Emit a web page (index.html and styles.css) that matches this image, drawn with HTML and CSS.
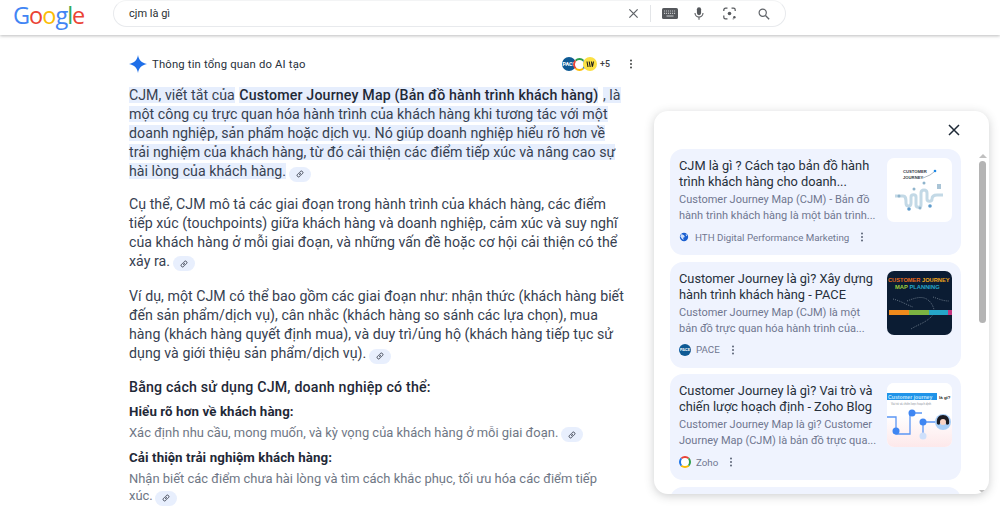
FILE: index.html
```html
<!DOCTYPE html>
<html lang="vi">
<head>
<meta charset="utf-8">
<title>cjm là gì</title>
<link rel="stylesheet" href="styles.css">
</head>
<body>
<svg class="defs" width="0" height="0" aria-hidden="true">
  <symbol id="chain" viewBox="0 0 24 24"><path fill="none" stroke="#474d5c" stroke-width="3" stroke-linecap="round" d="M10 14a4.5 4.5 0 0 0 6.4 0l3-3a4.5 4.5 0 0 0-6.4-6.4l-1.5 1.5M14 10a4.5 4.5 0 0 0-6.4 0l-3 3a4.5 4.5 0 0 0 6.4 6.4l1.5-1.5"/></symbol>
  <symbol id="dots" viewBox="0 0 4 14"><circle cx="2" cy="2" r="1.4"/><circle cx="2" cy="7" r="1.4"/><circle cx="2" cy="12" r="1.4"/></symbol>
</svg>
<header class="topbar">
  <div class="logo"><span class="b">G</span><span class="r">o</span><span class="y">o</span><span class="b">g</span><span class="g">l</span><span class="r">e</span></div>
  <div class="search">
    <span class="query">cjm là gì</span>
    <div class="tools">
      <svg class="ic-x" viewBox="0 0 12 12"><path d="M1.5 1.5l9 9M10.500 1.500l-9 9" stroke="#5f6368" stroke-width="1.400" fill="none"/></svg>
      <span class="divider"></span>
      <svg class="ic-kb" viewBox="0 0 16 11"><rect width="16" height="11" rx="1.600" fill="#55585c"/><path d="M2 3h12M2 5.400h12" stroke="#c4c6c9" stroke-width="1.100" stroke-dasharray="1.100 .9"/><path d="M4.500 8h7" stroke="#c4c6c9" stroke-width="1.100"/></svg>
      <svg class="ic-mic" viewBox="0 0 12 16"><rect x="3.500" y="0.500" width="5" height="9.500" rx="2.500" fill="#55585c"/><path d="M1.200 7.500a4.800 4.800 0 0 0 9.600 0M6 12.500V15.500" fill="none" stroke="#55585c" stroke-width="1.300"/></svg>
      <svg class="ic-lens" viewBox="0 0 16 16"><path d="M1 5V3.500A2 2 0 0 1 3 1.500h2.500M15 5V3.500a2 2 0 0 0-2-2h-2.500M1 10.500V12.500a2 2 0 0 0 2 2h2.500M13 14.500h-1" fill="none" stroke="#55585c" stroke-width="1.500"/><circle cx="8" cy="8" r="2.200" fill="#55585c"/><circle cx="14" cy="12.500" r="1.500" fill="#55585c"/></svg>
      <svg class="ic-search" viewBox="0 0 14 14"><circle cx="5.500" cy="5.500" r="4.200" fill="none" stroke="#5f6368" stroke-width="1.400"/><path d="M8.700 8.700L13 13" stroke="#5f6368" stroke-width="1.600"/></svg>
    </div>
  </div>
</header>

<div class="page">
  <main class="overview">
    <div class="ov-head">
      <svg class="spark" viewBox="0 0 18 18"><path d="M9 0c.7 4.900 3.600 8 9 9-5.400 1-8.300 4.100-9 9-.7-4.900-3.600-8-9-9 5.400-1 8.300-4.100 9-9z" fill="#1f6fe8"/></svg>
      <span class="ov-title">Thông tin tổng quan do AI tạo</span>
      <div class="ov-sources">
        <span class="fav fav-pace">PACE</span>
        <span class="fav fav-zoho"></span>
        <span class="fav fav-hth"><svg viewBox="0 0 10 10"><path d="M2 2.500l1 5.500M4.200 2.500l1 5.500M6.400 2.500l1 5.500M8.500 2.500L7.600 7" stroke="#1c1c1c" stroke-width="1.100" fill="none"/></svg></span>
        <span class="more">+5</span>
      </div>
      <svg class="kebab-lg" viewBox="0 0 4 14"><use href="#dots"/></svg>
    </div>

    <p class="para"><span class="hl">CJM, viết tắt của</span> <b class="hl strong">Customer Journey Map (Bản đồ hành trình khách hàng)</b> <span class="hl">, là</span><br><span class="hl">một công cụ trực quan hóa hành trình của khách hàng khi tương tác với một</span><br><span class="hl">doanh nghiệp, sản phẩm hoặc dịch vụ. Nó giúp doanh nghiệp hiểu rõ hơn về</span><br><span class="hl">trải nghiệm của khách hàng, từ đó cải thiện các điểm tiếp xúc và nâng cao sự</span><br><span class="hl">hài lòng của khách hàng.</span> <span class="link"><svg viewBox="0 0 24 24"><use href="#chain"/></svg></span></p>

    <p class="para">Cụ thể, CJM mô tả các giai đoạn trong hành trình của khách hàng, các điểm<br>tiếp xúc (touchpoints) giữa khách hàng và doanh nghiệp, cảm xúc và suy nghĩ<br>của khách hàng ở mỗi giai đoạn, và những vấn đề hoặc cơ hội cải thiện có thể<br>xảy ra. <span class="link"><svg viewBox="0 0 24 24"><use href="#chain"/></svg></span></p>

    <p class="para">Ví dụ, một CJM có thể bao gồm các giai đoạn như: nhận thức (khách hàng biết<br>đến sản phẩm/dịch vụ), cân nhắc (khách hàng so sánh các lựa chọn), mua<br>hàng (khách hàng quyết định mua), và duy trì/ủng hộ (khách hàng tiếp tục sử<br>dụng và giới thiệu sản phẩm/dịch vụ). <span class="link"><svg viewBox="0 0 24 24"><use href="#chain"/></svg></span></p>

    <h2 class="sub">Bằng cách sử dụng CJM, doanh nghiệp có thể:</h2>
    <h3 class="item-h">Hiểu rõ hơn về khách hàng:</h3>
    <p class="item-t">Xác định nhu cầu, mong muốn, và kỳ vọng của khách hàng ở mỗi giai đoạn. <span class="link"><svg viewBox="0 0 24 24"><use href="#chain"/></svg></span></p>
    <h3 class="item-h">Cải thiện trải nghiệm khách hàng:</h3>
    <p class="item-t">Nhận biết các điểm chưa hài lòng và tìm cách khắc phục, tối ưu hóa các điểm tiếp<br>xúc. <span class="link"><svg viewBox="0 0 24 24"><use href="#chain"/></svg></span></p>
  </main>

  <aside class="panel">
    <div class="panel-head">
      <svg class="close" viewBox="0 0 12 12"><path d="M1 1l10 10M11 1L1 11" stroke="#1f2a37" stroke-width="1.500" fill="none"/></svg>
    </div>
    <div class="panel-body">
      <div class="cards">
        <article class="card">
          <div class="card-text">
            <h4 class="card-title">CJM là gì ? Cách tạo bản đồ hành<br>trình khách hàng cho doanh...</h4>
            <p class="card-snip">Customer Journey Map (CJM) - Bản đồ<br>hành trình khách hàng là một bản trình...</p>
            <div class="card-src">
              <svg class="src-ic" viewBox="0 0 12 12"><circle cx="6" cy="6" r="5" fill="#1a5fd0"/><path d="M3 2.500l3 1.500 1 2-2 1 .5 3L3 7.500 1.500 5zM8 2l2 2-1.500 1z" fill="#cfe0fb"/></svg>
              <span>HTH Digital Performance Marketing</span>
              <svg class="kebab" viewBox="0 0 4 14"><use href="#dots"/></svg>
            </div>
          </div>
          <div class="thumb thumb-a">
            <svg viewBox="0 0 65 64">
              <text x="16" y="15" class="t-a">CUSTOMER</text>
              <text x="16" y="21" class="t-a">JOURNEY</text>
              <path d="M36 20l7-3 4-3" stroke="#7a8a99" stroke-width=".6" fill="none"/>
              <circle cx="48" cy="13" r="1.300" fill="#1e88e5"/>
              <path d="M8 38h8c3 0 3 3 3 7s5 4 5 0v-6c0-3 5-3 5 0v8c0 3 5 3 5 0v-12c0-4 6-4 6 0v6c0 3 5 3 5 0 0-3 2-4 5-4h6" stroke="#c3d9e6" stroke-width="3" fill="none"/>
              <circle cx="12" cy="38" r="1.500" fill="#8fb4cc"/><circle cx="22" cy="51" r="1.800" fill="#5f9ccc"/><circle cx="33" cy="50" r="1.500" fill="#8fb4cc"/><circle cx="43" cy="48" r="1.800" fill="#5f9ccc"/><circle cx="27" cy="31" r="1.500" fill="#8fb4cc"/><circle cx="37" cy="25" r="1.500" fill="#8fb4cc"/><rect x="50" y="26" width="4" height="5" fill="#a9c4d6"/>
            </svg>
          </div>
        </article>

        <article class="card">
          <div class="card-text">
            <h4 class="card-title">Customer Journey là gì? Xây dựng<br>hành trình khách hàng - PACE</h4>
            <p class="card-snip">Customer Journey Map (CJM) là một<br>bản đồ trực quan hóa hành trình của...</p>
            <div class="card-src">
              <span class="src-pace">PACE</span>
              <span>PACE</span>
              <svg class="kebab" viewBox="0 0 4 14"><use href="#dots"/></svg>
            </div>
          </div>
          <div class="thumb thumb-b">
            <svg viewBox="0 0 65 64">
              <text x="1" y="11" class="t-b1">CUSTOMER <tspan fill="#f2a71b">JOURNEY</tspan></text>
              <text x="8" y="18" class="t-b2"><tspan fill="#9ccc3c">MAP</tspan> <tspan fill="#26a6c9">PLANNING</tspan></text>
              <path d="M6 28c8 2 14 6 20 8M20 30c10-4 18-6 24 2 4 6 4 10 0 14-6 6-14 8-20 12M46 26c6 2 10 4 16 4" stroke="#9aa8b4" stroke-width=".6" fill="none" stroke-dasharray="1 1"/>
              <rect x="2" y="39" width="20" height="5" fill="#f08a1c"/><rect x="22" y="39" width="20" height="5" fill="#7cb342"/><rect x="42" y="39" width="19" height="5" fill="#26a6c9"/><rect x="61" y="39" width="4" height="5" fill="#c2357f"/>
            </svg>
          </div>
        </article>

        <article class="card">
          <div class="card-text">
            <h4 class="card-title">Customer Journey là gì? Vai trò và<br>chiến lược hoạch định - Zoho Blog</h4>
            <p class="card-snip">Customer Journey Map là gì? Customer<br>Journey Map (CJM) là bản đồ trực qua...</p>
            <div class="card-src">
              <span class="src-zoho"></span>
              <span>Zoho</span>
              <svg class="kebab" viewBox="0 0 4 14"><use href="#dots"/></svg>
            </div>
          </div>
          <div class="thumb thumb-c">
            <svg viewBox="0 0 65 64">
              <defs><linearGradient id="pink" x1="0" y1="0" x2="0" y2="1"><stop offset="0.500" stop-color="#fff"/><stop offset="1" stop-color="#fde8ea"/></linearGradient></defs>
              <rect width="65" height="64" fill="url(#pink)"/>
              <rect x="0" y="10" width="50" height="7" fill="#1f93e8"/>
              <text x="1" y="15.500" class="t-c1">Customer journey</text>
              <text x="52" y="15.500" class="t-c2">là gì?</text>
              <text x="4" y="22" class="t-c3">Vai trò và chiến lược hoạch định</text>
              <path d="M0 34h9v17h14V30h12M36 39h16M36 39v14" stroke="#5b97f5" stroke-width="1.300" fill="none"/>
              <circle cx="9" cy="48" r="3.500" fill="#3f86f2"/><circle cx="25" cy="30" r="3.500" fill="#3f86f2"/><circle cx="36" cy="39" r="3.500" fill="#3f86f2"/><circle cx="36" cy="53" r="3.500" fill="#cfe0fb"/>
              <circle cx="56" cy="39" r="8" fill="#a7cdf7"/><path d="M50 41c-1-6 2-9 6-9s7 3 6 9c-2 1-3 1-3-1h-6c0 2-1 2-3 1z" fill="#1b1b22"/><circle cx="56" cy="39" r="3" fill="#f8d3c5"/>
            </svg>
          </div>
        </article>

        <article class="card"></article>
      </div>
      <div class="scrollbar">
        <span class="arrow-up"></span>
        <span class="sb-thumb"></span>
        <span class="sb-fill"></span>
        <span class="arrow-down"></span>
      </div>
    </div>
  </aside>
</div>
</body>
</html>
```
FILE: styles.css
```css
* { box-sizing: border-box; }
html, body { margin: 0; height: 508px; overflow: hidden; background: #fff; }
body { font-family: Roboto, "Noto Sans", Arial, sans-serif; color: #1f2937; }
.defs { position: absolute; }

.topbar {
  height: 35px;
  display: flex;
  align-items: flex-start;
  background: #fff;
  box-shadow: 0 1px 3px rgba(60, 64, 67, .35);
  position: relative;
}
.logo {
  width: 113px;
  padding: 0 0 0 13px;
  font-family: "Open Sans", sans-serif;
  font-size: 23.500px;
  line-height: 30px;
  letter-spacing: -1px;
}
.b { color: #4285f4; } .r { color: #ea4335; } .y { color: #fbbc05; } .g { color: #34a853; }
.search {
  width: 673px;
  height: 27px;
  border: 1px solid #e8eaed;
  border-top-color: #f3f4f5;
  border-radius: 14px;
  display: flex;
  align-items: center;
  padding: 0 15px 0 15px;
}
.query { font-size: 11px; color: #2b2f33; flex: 1; padding-bottom: 1px; }
.tools { display: flex; align-items: center; }
.ic-x { width: 11px; height: 11px; }
.divider { width: 1px; height: 17px; background: #e3e5e8; margin: 0 11px 0 11px; }
.ic-kb { width: 16px; height: 11px; margin-right: 16px; }
.ic-mic { width: 10px; height: 15px; margin-right: 19px; }
.ic-lens { width: 13px; height: 13px; margin-right: 22px; }
.ic-search { width: 12px; height: 12px; }

.page { display: flex; align-items: flex-start; }

.overview { width: 495px; margin-left: 129px; padding-top: 18px; flex: none; }
.ov-head { display: flex; align-items: center; height: 22px; margin-bottom: 11px; }
.spark { width: 18px; height: 18px; margin-right: 5px; }
.ov-title { font-size: 11.300px; color: #27303b; flex: 1; letter-spacing: .17px; }
.ov-sources { display: flex; align-items: center; }
.fav {
  width: 14px; height: 14px; border-radius: 50%; margin-right: -3px;
  display: inline-flex; align-items: center; justify-content: center;
  font-size: 5.500px; font-weight: 700; position: relative;
}
.fav-pace { background: #0e5a94; color: #fff; }
.fav-zoho { background: #fff; border: 2px solid; border-color: #2e9e49 #1a73e8 #fbbc05 #e94235; width: 13px; height: 13px; }
.fav-hth { background: #fbe043; }
.fav-hth svg { width: 10px; height: 10px; }
.more { font-size: 8.800px; font-weight: 500; color: #3c4043; margin-left: 6px; }
.kebab-lg { width: 4px; height: 10px; margin: 0 -9px 0 19px; fill: #444746; }

.para { margin: 0 0 14px; font-size: 14.200px; line-height: 19px; color: #374151; letter-spacing: .03px; white-space: nowrap; }
.para:nth-of-type(1) { margin-bottom: 13px; }
.para:nth-of-type(2) { margin-bottom: 16px; }
.hl { background: #e6eefd; }
.strong { font-weight: 500; color: #1f2937; letter-spacing: .16px; margin: 0 1px; }
.link {
  display: inline-flex; align-items: center; justify-content: center;
  width: 22px; height: 15px; border-radius: 8px; background: #e8effd;
  vertical-align: -2px; margin-left: -1px;
}
.link svg { width: 8px; height: 8px; }

.sub { margin: 0; font-size: 14.200px; line-height: 19px; font-weight: 500; color: #1f2937; letter-spacing: .19px; }
.item-h { margin: 6px 0 0; font-size: 13.300px; line-height: 17px; font-weight: 700; color: #1f2937; letter-spacing: .1px; }
.item-t { margin: 4px 0 0; font-size: 12.950px; line-height: 17px; color: #6f7785; white-space: nowrap; }
.item-t + .item-h { margin-top: 7px; }

.panel {
  width: 335px;
  height: 383px;
  margin: 76px 0 0 30px;
  flex: none;
  background: #fff;
  border-radius: 14px;
  box-shadow: 0 2px 10px rgba(60, 64, 67, .25);
  overflow: hidden;
  display: flex;
  flex-direction: column;
}
.panel-head { height: 38px; display: flex; justify-content: flex-end; align-items: flex-start; padding: 13px 29px 0 0; flex: none; }
.close { width: 12px; height: 12px; }
.panel-body { display: flex; flex: 1; min-height: 0; overflow: hidden; }
.cards { width: 291px; margin-left: 16px; display: flex; flex-direction: column; gap: 6.500px; flex: none; }
.card {
  height: 106px; flex: none;
  background: #eff3fe;
  border-radius: 13px;
  padding: 9px 9px 0 9px;
  display: flex;
}
.card-text { flex: 1; min-width: 0; white-space: nowrap; }
.card-title { margin: 0; font-size: 12.800px; line-height: 16px; font-weight: 400; color: #27303b; }
.card-snip { margin: 2px 0 0; font-size: 11px; line-height: 16px; color: #6f7790; }
.card-src { display: flex; align-items: center; gap: 5px; margin-top: 5px; height: 16px; font-size: 9.750px; color: #6f7790; }
.src-ic { width: 10px; height: 10px; margin-right: 1px; }
.src-pace { width: 12px; height: 12px; border-radius: 50%; background: #0e5a94; color: #fff; font-size: 4px; font-weight: 700; display: flex; align-items: center; justify-content: center; }
.src-zoho { width: 12px; height: 12px; border-radius: 50%; border: 2px solid; border-color: #e94235 #2e9e49 #fbbc05 #1a73e8; background: #fff; }
.kebab { width: 4px; height: 10px; fill: #5c6477; margin-left: 6px; }
.thumb { width: 65px; height: 64px; border-radius: 7px; overflow: hidden; flex: none; background: #fff; }
.thumb svg { display: block; width: 65px; height: 64px; }
.thumb-b { background: #0b1c33; }
.t-a { font: 700 4.200px "Liberation Sans", sans-serif; fill: #33383f; }
.t-b1 { font: 700 5.700px "Liberation Sans", sans-serif; fill: #ea6a1a; }
.t-b2 { font: 700 5.800px "Liberation Sans", sans-serif; }
.t-c1 { font: 700 5.200px "Liberation Sans", sans-serif; fill: #bfe6ff; }
.t-c2 { font: 700 4.400px "Liberation Sans", sans-serif; fill: #222; }
.t-c3 { font: 400 2.800px "Liberation Sans", sans-serif; fill: #8a8f98; }

.scrollbar { width: 7px; margin-left: 18px; display: flex; flex-direction: column; align-items: center; flex: none; height: 345px; }
.arrow-up, .arrow-down { width: 0; height: 0; border-left: 4px solid transparent; border-right: 4px solid transparent; }
.arrow-up { border-bottom: 4px solid #c0c0c0; margin: 5px 0 3px; }
.arrow-down { border-top: 4px solid #c0c0c0; }
.sb-thumb { width: 7px; height: 162px; background: #b4b4b4; border-radius: 4px; flex: none; }
.sb-fill { flex: 1; }
```
